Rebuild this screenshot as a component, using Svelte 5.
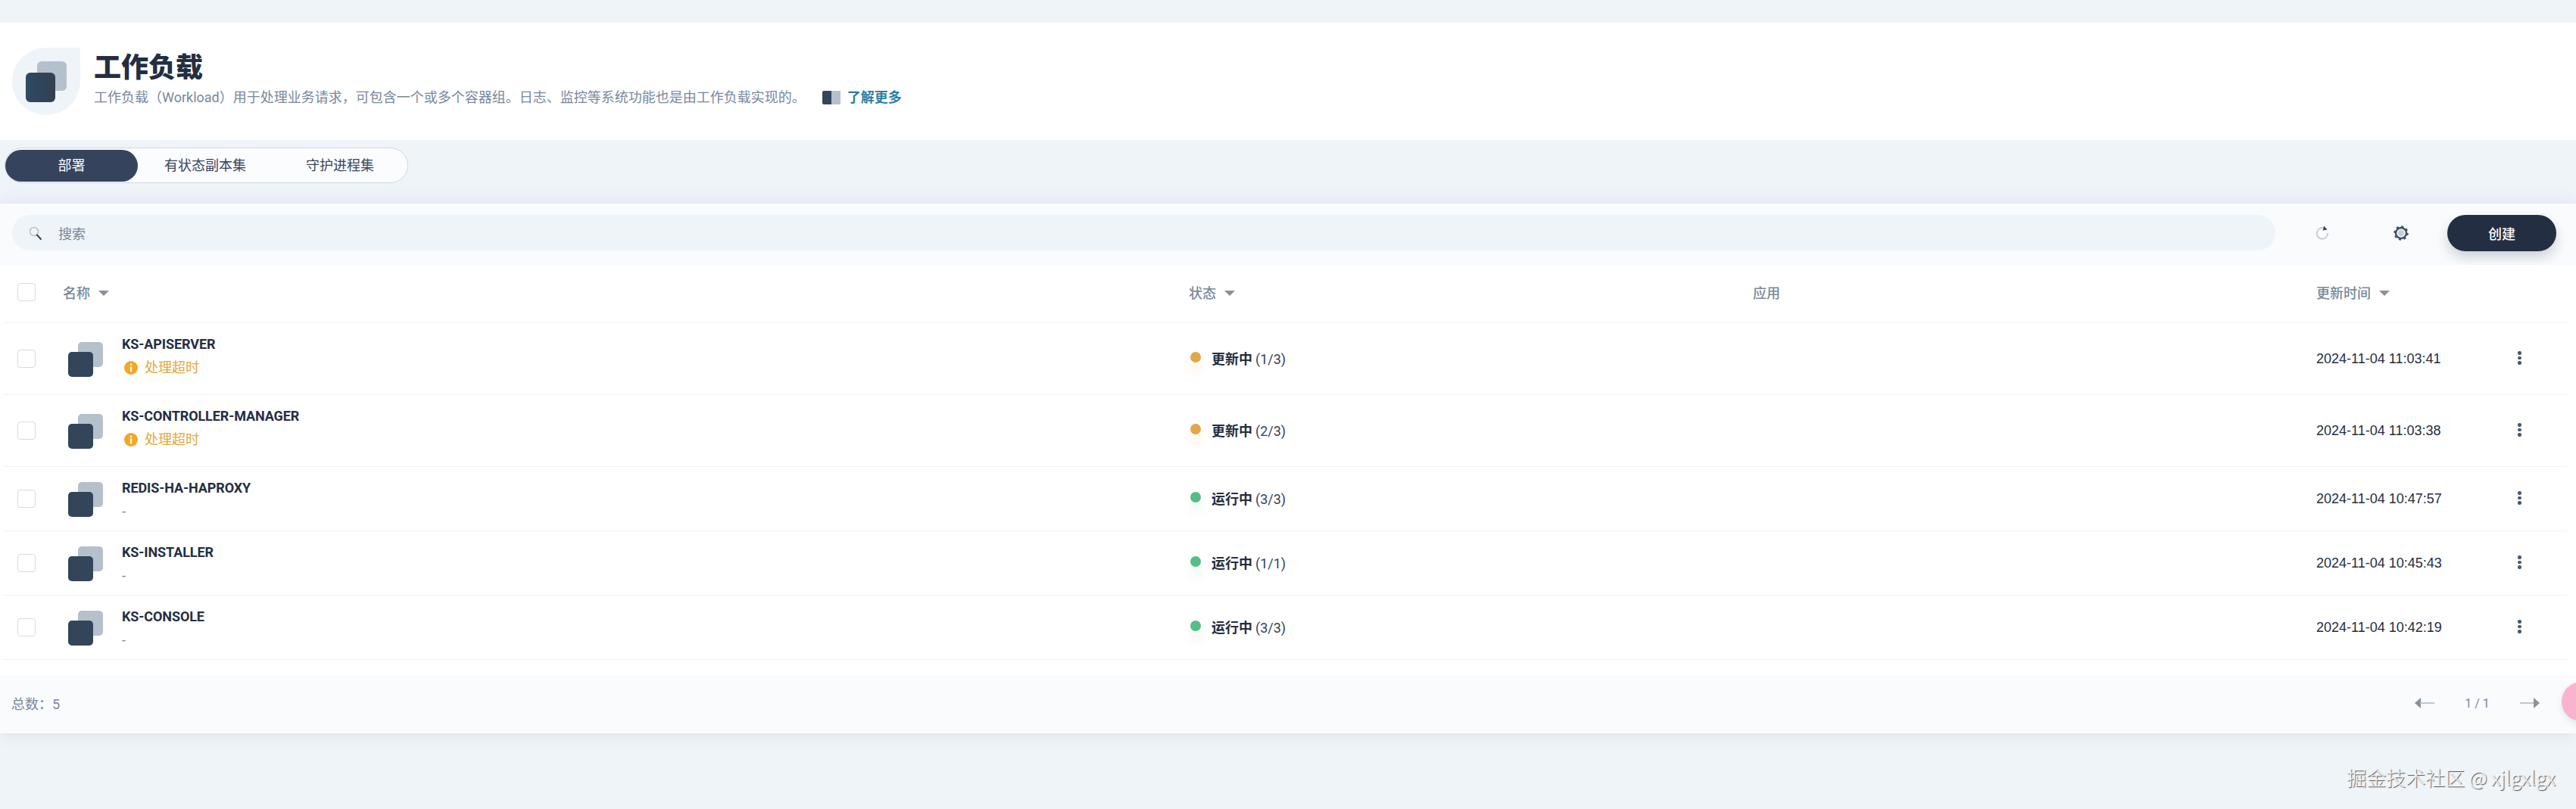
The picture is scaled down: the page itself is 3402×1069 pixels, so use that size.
<script>
  const rows = [
    { name: 'KS-APISERVER', warn: true, state: '更新中', count: '(1/3)', time: '2024-11-04 11:03:41', kind: 'updating' },
    { name: 'KS-CONTROLLER-MANAGER', warn: true, state: '更新中', count: '(2/3)', time: '2024-11-04 11:03:38', kind: 'updating' },
    { name: 'REDIS-HA-HAPROXY', warn: false, state: '运行中', count: '(3/3)', time: '2024-11-04 10:47:57', kind: 'running' },
    { name: 'KS-INSTALLER', warn: false, state: '运行中', count: '(1/1)', time: '2024-11-04 10:45:43', kind: 'running' },
    { name: 'KS-CONSOLE', warn: false, state: '运行中', count: '(3/3)', time: '2024-11-04 10:42:19', kind: 'running' }
  ];
  const tabs = ['部署', '有状态副本集', '守护进程集'];
</script>

<div class="page">
  <header class="banner">
    <div class="leaf"><span class="sq back big"></span><span class="sq front big"></span></div>
    <div class="intro">
      <h1>工作负载</h1>
      <p>
        <span>工作负载（Workload）用于处理业务请求，可包含一个或多个容器组。日志、监控等系统功能也是由工作负载实现的。</span>
        <i class="book"><b></b><b></b></i>
        <a href="#more">了解更多</a>
      </p>
    </div>
  </header>

  <nav class="band">
    <div class="tabs">
      {#each tabs as t, i}
        <div class="tab" class:on={i === 0}>{t}</div>
      {/each}
    </div>
  </nav>

  <section class="card">
    <div class="toolbar">
      <div class="search">
        <svg width="18" height="18" viewBox="0 0 18 18" fill="none">
          <circle cx="7" cy="7" r="5.5" stroke="#b6c2cf" stroke-width="1.6" />
          <path d="M11 11.5 L16 17" stroke="#36435c" stroke-width="2" stroke-linecap="round" />
        </svg>
        <span>搜索</span>
      </div>
      <div class="refresh">
        <svg width="20" height="20" viewBox="0 0 20 20" fill="none">
          <path d="M12.5 3.6 A7.3 7.3 0 1 0 17.2 10" stroke="#c3cbd5" stroke-width="1.8" />
          <path d="M12 .5 L16.6 5.6 L10.8 6.4 Z" fill="#36435c" />
        </svg>
      </div>
      <div class="gear">
        <svg width="20" height="20" viewBox="0 0 20 20" fill="none">
          <circle cx="10" cy="10" r="7" stroke="#3e4d61" stroke-width="2.4" />
          <circle cx="10" cy="10" r="8.7" stroke="#3e4d61" stroke-width="2" stroke-dasharray="3 3.83" />
          <circle cx="10" cy="10" r="4.2" fill="#c6cfd9" />
        </svg>
      </div>
      <button class="create">创建</button>
    </div>

    <div class="table">
      <div class="row head">
        <div class="check"><span class="box"></span></div>
        <div class="th">名称<i class="caret"></i></div>
        <div class="th">状态<i class="caret"></i></div>
        <div class="th">应用</div>
        <div class="th">更新时间<i class="caret"></i></div>
        <div></div>
      </div>
      {#each rows as r}
        <div class="row item" class:tall={r.warn}>
          <div class="check"><span class="box"></span></div>
          <div class="namecell">
            <div class="mini"><span class="sq back"></span><span class="sq front"></span></div>
            <div class="names">
              <div class="name">{r.name}</div>
              {#if r.warn}
                <div class="warn">
                  <svg width="18" height="18" viewBox="0 0 18 18">
                    <circle cx="9" cy="9" r="9" fill="#f5a623" />
                    <rect x="7.8" y="3.6" width="2.4" height="2.4" rx="1" fill="#fff" />
                    <rect x="7.8" y="7.2" width="2.4" height="7.4" rx="1" fill="#fff" />
                  </svg>
                  <span>处理超时</span>
                </div>
              {:else}
                <div class="dash">-</div>
              {/if}
            </div>
          </div>
          <div class="status">
            <i class="dot {r.kind}"></i>
            <strong>{r.state}</strong>
            <span>{r.count}</span>
          </div>
          <div></div>
          <div class="time">{r.time}</div>
          <div class="more"><i></i><i></i><i></i></div>
        </div>
      {/each}
    </div>

    <footer class="foot">
      <div class="total">总数：<span>5</span></div>
      <div class="pager">
        <svg width="26" height="14" viewBox="0 0 26 14">
          <path d="M8 0 L0 7 L8 14 Z" fill="#8a929c" />
          <path d="M7 7 H26" stroke="#b4bbc4" stroke-width="1.6" />
        </svg>
        <span class="pageno">1 / 1</span>
        <svg width="26" height="14" viewBox="0 0 26 14">
          <path d="M0 7 H19" stroke="#b4bbc4" stroke-width="1.6" />
          <path d="M18 0 L26 7 L18 14 Z" fill="#8a929c" />
        </svg>
      </div>
    </footer>
  </section>

  <div class="bubble"></div>
  <div class="mark">掘金技术社区 @ xjlgxlgx</div>
</div>

<style>
  :global(body) {
    margin: 0;
    background: #eff4f9;
  }

  .page {
    position: relative;
    height: 1069px;
    overflow: hidden;
    padding-top: 30px;
    box-sizing: border-box;
    background: #eff4f9;
    font-family: Roboto, "Noto Sans CJK SC", sans-serif;
    font-size: 18px;
    color: #242e42;
  }

  .banner {
    display: flex;
    align-items: flex-start;
    gap: 18px;
    height: 155px;
    padding: 33px 0 0 16px;
    box-sizing: border-box;
    background: #fff;
  }

  .leaf {
    position: relative;
    flex: none;
    width: 90px;
    height: 89px;
    border-radius: 50% 0 50% 50%;
    background: #eff4f9;
  }

  .sq {
    position: absolute;
    display: block;
    border-radius: 5px;
    width: 33px;
    height: 33px;
  }

  .back { left: 13px; top: 0; background: #b5c0cd; }
  .front { left: 0; top: 13px; background: #33455a; }

  .sq.big { width: 39px; height: 39px; border-radius: 6px; }
  .back.big { left: 33px; top: 18px; }
  .front.big { left: 18px; top: 33px; background: linear-gradient(90deg, #2e4a64, #33404f); }

  .intro {
    display: flex;
    flex-direction: column;
  }

  h1 {
    margin: 0;
    font-size: 36px;
    line-height: 54px;
    font-weight: 900;
    color: #242e42;
  }

  p {
    display: flex;
    align-items: center;
    margin: 0;
    font-size: 18px;
    line-height: 24px;
    color: #79879c;
  }

  .book {
    display: flex;
    margin: 0 9px 0 22px;
  }

  .book b {
    display: block;
    width: 12px;
    height: 18px;
    background: #b5c0cd;
  }

  .book b:first-child {
    background: #33455a;
    border-radius: 2px 0 0 2px;
  }

  a {
    color: #2b7ea5;
    font-weight: 700;
    text-decoration: none;
  }

  .band {
    padding: 10px 0 27px 6px;
  }

  .tabs {
    display: inline-flex;
    padding: 2px 0 1px 0;
    border: 1px solid #d1d7df;
    border-radius: 24px;
    background: #fbfcfe;
  }

  .tab {
    width: 178px;
    height: 42px;
    line-height: 42px;
    text-align: center;
    color: #36435c;
  }

  .tab.on {
    width: 175px;
    border-radius: 21px;
    background: #36435c;
    color: #fff;
  }

  .card {
    box-shadow: 0 -8px 18px rgba(36, 46, 66, 0.04), 0 6px 18px rgba(36, 46, 66, 0.06);
  }

  .toolbar {
    display: flex;
    align-items: center;
    height: 81px;
    padding: 0 26px 4px 16px;
    box-sizing: border-box;
    background: #f9fbfd;
  }

  .search {
    display: flex;
    align-items: center;
    gap: 21px;
    flex: none;
    width: 2989px;
    height: 47px;
    padding-left: 22px;
    box-sizing: border-box;
    border-radius: 24px;
    background: #eff4f9;
    color: #79879c;
  }

  .refresh, .gear {
    display: flex;
    flex: none;
  }

  .refresh { margin-left: 52px; }
  .gear { margin-left: 84px; }

  .create {
    width: 144px;
    height: 48px;
    margin-left: 51px;
    border: 0;
    border-radius: 24px;
    background: #242e42;
    color: #fff;
    font: 500 18px Roboto, "Noto Sans CJK SC", sans-serif;
    box-shadow: 0 8px 16px rgba(36, 46, 66, 0.2);
  }

  .table {
    position: relative;
    padding: 0 12px 20px 4px;
    background: #fff;
  }

  .row {
    display: grid;
    grid-template-columns: 79px 1487px 745px 744px 261px 1fr;
    align-items: center;
    border-bottom: 1px solid #eff2f5;
    box-sizing: border-box;
  }

  .head {
    height: 77px;
    padding-bottom: 4px;
  }

  .item {
    height: 85px;
    padding-bottom: 1px;
  }

  .item.tall {
    height: 95px;
  }

  .check {
    display: flex;
    padding-left: 19px;
  }

  .box {
    display: block;
    width: 24px;
    height: 24px;
    box-sizing: border-box;
    border: 1px solid #d5dbe2;
    border-radius: 4px;
    background: #fff;
  }

  .th {
    display: flex;
    align-items: center;
    color: #79879c;
    font-weight: 500;
  }

  .caret {
    display: block;
    width: 0;
    height: 0;
    margin: 2px 0 0 11px;
    border-left: 7px solid transparent;
    border-right: 7px solid transparent;
    border-top: 7px solid #8a8ea3;
  }

  .namecell {
    display: flex;
    align-items: flex-start;
    gap: 25px;
    padding-left: 7px;
    align-self: start;
  }

  .mini {
    position: relative;
    flex: none;
    width: 46px;
    height: 45px;
    margin-top: 20px;
  }

  .tall .mini { margin-top: 25px; }

  .names {
    padding-top: 15px;
  }

  .name {
    font-size: 18px;
    font-weight: 700;
    line-height: 25px;
    letter-spacing: -0.1px;
    color: #242e42;
  }

  .warn {
    display: flex;
    align-items: center;
    gap: 9px;
    margin: 7px 0 0 3px;
    line-height: 24px;
    color: #e0a83e;
  }

  .warn svg { flex: none; }

  .dash {
    margin-top: 7px;
    line-height: 24px;
    color: #79879c;
  }

  .status {
    position: relative;
    display: flex;
    align-items: center;
    margin-top: 2px;
    padding-left: 30px;
    line-height: 24px;
  }

  .status strong {
    font-weight: 700;
    margin-right: 4px;
  }

  .status span {
    color: #36435c;
  }

  .dot {
    position: absolute;
    left: 2px;
    top: 2px;
    width: 14px;
    height: 14px;
    border-radius: 50%;
  }

  .dot.updating {
    background: #e2a64b;
    box-shadow: 0 12px 14px rgba(245, 166, 35, 0.14);
  }

  .dot.running {
    background: #55bc8a;
    box-shadow: 0 12px 14px rgba(85, 188, 138, 0.14);
  }

  .time {
    margin-top: 2px;
    font-family: "Liberation Sans", sans-serif;
    font-size: 18px;
    color: #242e42;
  }

  .more {
    display: flex;
    flex-direction: column;
    gap: 2px;
    padding-left: 5px;
    margin-top: -1px;
  }

  .more i {
    display: block;
    width: 4.5px;
    height: 4.5px;
    border-radius: 50%;
    background: #48566a;
  }

  .foot {
    display: flex;
    justify-content: space-between;
    align-items: center;
    height: 77px;
    padding: 0 48px 3px 15px;
    box-sizing: border-box;
    background: #f9fbfd;
    color: #79879c;
  }

  .pager {
    display: flex;
    align-items: center;
    gap: 40px;
  }

  .pageno {
    width: 33px;
    white-space: nowrap;
    font-size: 16px;
    text-align: center;
  }

  .bubble {
    position: absolute;
    left: 3383px;
    top: 901px;
    width: 52px;
    height: 52px;
    border-radius: 50%;
    background: #f8b4cf;
    box-shadow: 0 4px 10px rgba(36, 46, 66, 0.1);
  }

  .mark {
    position: absolute;
    right: 27px;
    top: 1009px;
    font-family: "Noto Sans CJK SC", sans-serif;
    font-size: 26px;
    font-weight: 300;
    line-height: 36px;
    color: #f4f6f8;
    text-shadow: 1px 1px 1px #4a4a4a;
  }
</style>
